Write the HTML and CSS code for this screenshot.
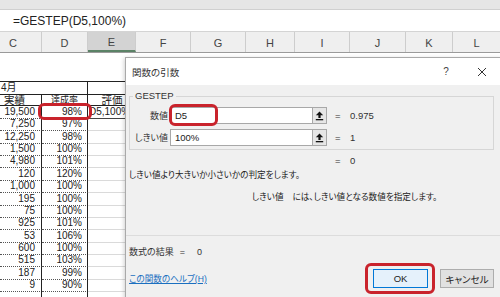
FILE: index.html
```html
<!DOCTYPE html>
<html lang="ja">
<head>
<meta charset="utf-8">
<title>関数の引数</title>
<link rel="stylesheet" href="styles.css">
</head>
<body>
<div class="app">
  <div class="topband"></div>
  <div class="fbar"><span>=GESTEP(D5,100%)</span></div>
  <div class="colheads">
    <div class="ch ch-c">C</div>
    <div class="ch ch-d">D</div>
    <div class="ch ch-e sel">E</div>
    <div class="ch ch-f">F</div>
    <div class="ch ch-g">G</div>
    <div class="ch ch-h">H</div>
    <div class="ch ch-i">I</div>
    <div class="ch ch-j">J</div>
    <div class="ch ch-k">K</div>
    <div class="ch ch-l">L</div>
  </div>
  <div class="sheet">
    <div class="spacer"></div>
    <div class="row month">
      <div class="cell cd">4月</div>
      <div class="cell e"></div>
    </div>
    <div class="row thead">
      <div class="cell c">実績</div>
      <div class="cell d">達成率</div>
      <div class="cell e">評価</div>
    </div>
    <div class="row data">
      <div class="cell c">19,500</div>
      <div class="cell d hl">98%<span class="mark mark-cell"></span></div>
      <div class="cell e active">D5,100%)</div>
    </div>
    <div class="row data"><div class="cell c">7,250</div><div class="cell d">97%</div><div class="cell e"></div></div>
    <div class="row data"><div class="cell c">12,250</div><div class="cell d">98%</div><div class="cell e"></div></div>
    <div class="row data"><div class="cell c">1,500</div><div class="cell d">100%</div><div class="cell e"></div></div>
    <div class="row data"><div class="cell c">4,980</div><div class="cell d">101%</div><div class="cell e"></div></div>
    <div class="row data"><div class="cell c">120</div><div class="cell d">120%</div><div class="cell e"></div></div>
    <div class="row data"><div class="cell c">1,000</div><div class="cell d">100%</div><div class="cell e"></div></div>
    <div class="row data"><div class="cell c">195</div><div class="cell d">100%</div><div class="cell e"></div></div>
    <div class="row data"><div class="cell c">75</div><div class="cell d">100%</div><div class="cell e"></div></div>
    <div class="row data"><div class="cell c">925</div><div class="cell d">101%</div><div class="cell e"></div></div>
    <div class="row data"><div class="cell c">53</div><div class="cell d">106%</div><div class="cell e"></div></div>
    <div class="row data"><div class="cell c">600</div><div class="cell d">100%</div><div class="cell e"></div></div>
    <div class="row data"><div class="cell c">515</div><div class="cell d">103%</div><div class="cell e"></div></div>
    <div class="row data"><div class="cell c">187</div><div class="cell d">99%</div><div class="cell e"></div></div>
    <div class="row data"><div class="cell c">9</div><div class="cell d">90%</div><div class="cell e"></div></div>
    <div class="row data"><div class="cell c"></div><div class="cell d"></div><div class="cell e"></div></div>
  </div>

  <div class="dialog">
    <div class="titlebar">
      <span class="title">関数の引数</span>
      <span class="tb-btn">?</span>
      <span class="tb-btn close">
        <svg width="10" height="10" viewBox="0 0 10 10"><path d="M1 1 L9 9 M9 1 L1 9" stroke="#333" stroke-width="1" fill="none"/></svg>
      </span>
    </div>
    <div class="dbody">
      <fieldset class="group">
        <legend>GESTEP</legend>
        <div class="arg">
          <span class="arg-label">数値</span>
          <span class="arg-input">D5<span class="mark mark-input"></span></span>
          <span class="refbtn"><svg width="9" height="10" viewBox="0 0 9 10"><path d="M4.5 0.5 L8.2 4.2 H5.6 V7 H3.4 V4.2 H0.8 Z" fill="#111"/><rect x="0.8" y="8" width="7.4" height="1.3" fill="#111"/></svg></span>
          <span class="arg-val"><span class="eq">=</span>0.975</span>
        </div>
        <div class="arg">
          <span class="arg-label">しきい値</span>
          <span class="arg-input">100%</span>
          <span class="refbtn"><svg width="9" height="10" viewBox="0 0 9 10"><path d="M4.5 0.5 L8.2 4.2 H5.6 V7 H3.4 V4.2 H0.8 Z" fill="#111"/><rect x="0.8" y="8" width="7.4" height="1.3" fill="#111"/></svg></span>
          <span class="arg-val"><span class="eq">=</span>1</span>
        </div>
      </fieldset>
      <div class="fresult"><span class="eq">=</span>0</div>
      <p class="desc">しきい値より大きいか小さいかの判定をします。</p>
      <p class="argdesc"><span class="argname">しきい値</span>には、しきい値となる数値を指定します。</p>
      <div class="sep"></div>
      <div class="foot">
        <div class="foot-left">
          <div class="result">数式の結果<span class="res-eq">=</span>0</div>
          <a class="help">この関数のヘルプ(H)</a>
        </div>
        <div class="buttons">
          <span class="btn ok">OK<span class="mark mark-ok"></span></span>
          <span class="btn">キャンセル</span>
        </div>
      </div>
    </div>
  </div>
</div>
</body>
</html>
```

FILE: styles.css
```css
* { box-sizing: border-box; margin: 0; padding: 0; }
body {
  margin: 0;
  width: 500px;
  height: 297px;
  overflow: hidden;
  background: #fff;
  font-family: "Liberation Sans", "Noto Sans CJK JP", sans-serif;
  color: #222;
}
.app {
  position: relative;
  width: 500px;
  height: 297px;
  overflow: hidden;
  display: flex;
  flex-direction: column;
}
.topband {
  flex: none;
  height: 10px;
  background: #e6e6e6;
  border-bottom: 1px solid #d0d0d0;
}
.fbar {
  flex: none;
  height: 22px;
  display: flex;
  align-items: center;
  padding-left: 13px;
  font-size: 12px;
  color: #222;
  background: #fff;
  border-bottom: 1px solid #d4d4d4;
}
.colheads {
  flex: none;
  height: 21px;
  display: flex;
  background: #efefef;
  border-bottom: 1px solid #9a9a9a;
}
.ch {
  flex: none;
  display: flex;
  align-items: center;
  justify-content: center;
  font-size: 11px;
  color: #444;
  border-right: 1px solid #cdcdcd;
  padding-top: 1px;
}
.ch-c { width: 42px; justify-content: flex-start; padding-left: 9px; }
.ch-d { width: 46px; }
.ch-e { width: 48px; }
.ch-f { width: 55px; }
.ch-g { width: 55px; }
.ch-h { width: 49px; }
.ch-i { width: 55px; }
.ch-j { width: 56px; }
.ch-k { width: 47px; }
.ch-l { width: 47px; border-right: none; }
.ch.sel {
  background: #d3d3d3;
  border-bottom: 2px solid #5b8266;
}

.sheet {
  flex: none;
  display: flex;
  flex-direction: column;
}
.spacer { height: 28px; }
.row {
  display: grid;
  grid-template-columns: 42px 46px 48px 1fr;
}
.cell {
  font-size: 10px;
  line-height: 12px;
  white-space: nowrap;
  overflow: hidden;
  position: relative;
}
.row.month {
  height: 13px;
  border-top: 1px solid #222;
}
.row.month .cd {
  grid-column: 1 / 3;
  border-right: 1px solid #222;
  padding-left: 1px;
  font-size: 10px;
}
.row.month .e { grid-column: 3 / 5; }
.row.thead {
  height: 12px;
  border-top: 1px solid #222;
  border-bottom: 1px solid #222;
}
.row.thead .cell { font-size: 10.5px; line-height: 11px; }
.row.thead .c { padding-left: 4px; border-right: 1px solid #222; }
.row.thead .d { text-align: center; border-right: 1px solid #222; font-size: 9px; }
.row.thead .e { text-align: center; padding-left: 0; width: 48px; }
.row.data {
  height: 12.36px;
}
.row.data .c {
  text-align: right;
  padding-right: 6px;
  border-right: 1px solid #222;
  border-bottom: 1px dotted #555;
}
.row.data .d {
  text-align: right;
  padding-right: 5px;
  border-right: 1px solid #222;
  border-bottom: 1px dotted #555;
  overflow: visible;
}
.row.data .e {
  border-bottom: 1px solid #dadada;
}
.row.data .e.active {
  padding-left: 1px;
  border-bottom: 1px solid #444;
}
.mark {
  position: absolute;
  border: 3px solid #c9232c;
  border-radius: 6px;
  pointer-events: none;
}
.mark-cell {
  left: -4px;
  top: -3px;
  width: 54px;
  height: 17px;
  z-index: 2;
}

/* dialog */
.dialog {
  position: absolute;
  left: 125px;
  top: 57px;
  width: 378px;
  height: 245px;
  background: #f0f0f0;
  border: 1px solid #a9a9a9;
  box-shadow: -1px 1px 4px rgba(0, 0, 0, 0.18);
  font-size: 8.6px;
  color: #222;
  display: flex;
  flex-direction: column;
  font-feature-settings: "palt";
}
.titlebar {
  flex: none;
  height: 27px;
  background: #fff;
  display: flex;
  align-items: center;
  padding-left: 6px;
}
.title { flex: 1; font-size: 9.5px; color: #333; }
.tb-btn {
  width: 36px;
  text-align: center;
  font-size: 10px;
  color: #444;
  display: flex;
  justify-content: center;
}
.tb-btn.close { margin-right: 2px; }
.dbody {
  flex: 1;
  display: flex;
  flex-direction: column;
}
.group {
  margin: 5px 8px 0 3px;
  border: 1px solid #d6d6d6;
  padding: 5px 0 3px 0;
  display: flex;
  flex-direction: column;
  gap: 5px;
}
.group legend {
  margin-left: 3px;
  padding: 0 2px;
  font-size: 9.5px;
  line-height: 12px;
  color: #333;
}
.arg {
  display: flex;
  align-items: center;
  height: 17px;
}
.arg-label {
  width: 40px;
  text-align: right;
  padding-right: 2px;
  font-size: 9px;
  color: #333;
}
.arg-input {
  position: relative;
  width: 142px;
  height: 17px;
  background: #fff;
  border: 1px solid #a8a8a8;
  border-right: none;
  padding-left: 4px;
  font-size: 9.5px;
  line-height: 15px;
  color: #222;
}
.refbtn {
  width: 15px;
  height: 17px;
  background: #e6e6e6;
  border: 1px solid #a8a8a8;
  display: flex;
  align-items: center;
  justify-content: center;
}
.arg-val {
  margin-left: 8px;
  font-size: 9.5px;
  color: #333;
}
.eq { display: inline-block; width: 15px; }
.mark-input {
  left: -2px;
  top: -4px;
  width: 49px;
  height: 22px;
}
.fresult {
  margin-top: 5px;
  margin-left: 209px;
  font-size: 9.5px;
  line-height: 12px;
  color: #333;
}
.desc {
  margin-top: 2px;
  margin-left: 3px;
  line-height: 12px;
  color: #222;
}
.argdesc {
  margin-top: 10px;
  margin-left: 126px;
  line-height: 12px;
  color: #222;
}
.argname { margin-right: 9px; }
.sep {
  margin-top: 32px;
  height: 1px;
  background: #dcdcdc;
}
.foot {
  display: flex;
  justify-content: space-between;
  padding-right: 8px;
}
.foot-left {
  padding-left: 3px;
  padding-top: 10px;
  display: flex;
  flex-direction: column;
  gap: 15px;
}
.result { line-height: 12px; color: #333; font-size: 9px; }
.res-eq { display: inline-block; margin: 0 12px 0 6px; }
.help {
  line-height: 12px;
  color: #1a6fc0;
  text-decoration: underline;
}
.buttons {
  margin-top: 33px;
  display: flex;
  gap: 12px;
  align-self: flex-start;
}
.btn {
  position: relative;
  width: 54px;
  height: 19px;
  display: flex;
  align-items: center;
  justify-content: center;
  background: #e1e1e1;
  border: 1px solid #adadad;
  font-size: 9.5px;
  color: #222;
}
.btn.ok {
  width: 55px;
  background: #e5f1fb;
  border: 1px solid #0078d7;
}
.mark-ok {
  left: -9px;
  top: -7px;
  width: 70px;
  height: 31px;
}
```
